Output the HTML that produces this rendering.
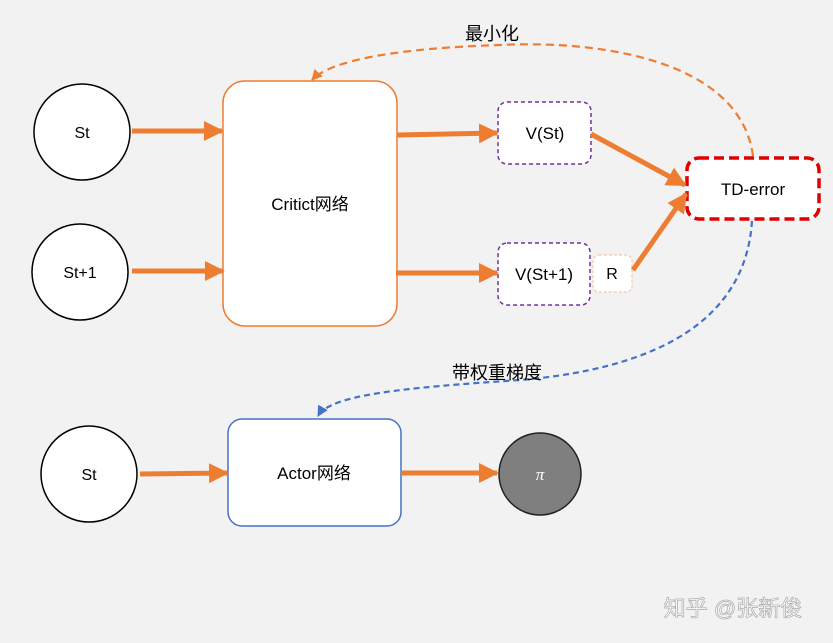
<!DOCTYPE html>
<html><head><meta charset="utf-8"><style>
body{margin:0;background:#f2f2f2;}
svg{display:block}
text{font-family:"Liberation Sans","Noto Sans CJK SC",sans-serif;fill:#000}
</style></head><body>
<svg width="833" height="643" viewBox="0 0 833 643" xmlns="http://www.w3.org/2000/svg">
<defs>
<marker id="ao" viewBox="0 0 10 10" refX="9" refY="5" markerWidth="4" markerHeight="4" orient="auto" markerUnits="strokeWidth"><path d="M0,0 L10,5 L0,10 z" fill="#ed7d31"/></marker>
<marker id="ad" viewBox="0 0 10 10" refX="9" refY="5" markerWidth="5" markerHeight="5" orient="auto" markerUnits="strokeWidth"><path d="M0,0 L10,5 L0,10 z" fill="#ed7d31"/></marker>
<marker id="ab" viewBox="0 0 10 10" refX="9" refY="5" markerWidth="5" markerHeight="5" orient="auto" markerUnits="strokeWidth"><path d="M0,0 L10,5 L0,10 z" fill="#4472c4"/></marker>
</defs>
<rect width="833" height="643" fill="#f2f2f2"/>
<path d="M753,156 C740,60 600,40 500,45 C400,48 330,60 312,80" fill="none" stroke="#ed7d31" stroke-width="2.2" stroke-dasharray="8,5" marker-end="url(#ad)"/>
<text x="492" y="40" font-size="18" text-anchor="middle">最小化</text>
<path d="M752,221 C745,330 640,370 520,380 C400,388 330,395 318,416" fill="none" stroke="#4472c4" stroke-width="2.2" stroke-dasharray="6,4" marker-end="url(#ab)"/>
<text x="497" y="379" font-size="18" text-anchor="middle">带权重梯度</text>
<circle cx="82" cy="132" r="48" fill="#fff" stroke="#000" stroke-width="1.5"/>
<text x="82" y="138" font-size="16" text-anchor="middle">St</text>
<circle cx="80" cy="272" r="48" fill="#fff" stroke="#000" stroke-width="1.5"/>
<text x="80" y="278" font-size="16" text-anchor="middle">St+1</text>
<circle cx="89" cy="474" r="48" fill="#fff" stroke="#000" stroke-width="1.5"/>
<text x="89" y="480" font-size="16" text-anchor="middle">St</text>
<circle cx="540" cy="474" r="41" fill="#7f7f7f" stroke="#222" stroke-width="1.5"/>
<text x="540" y="480" font-size="17" font-style="italic" text-anchor="middle" style="fill:#fff;font-family:'Liberation Serif',serif">π</text>
<rect x="223" y="81" width="174" height="245" rx="22" fill="#fff" stroke="#ed7d31" stroke-width="1.5"/>
<text x="310" y="210" font-size="17" text-anchor="middle">Critict网络</text>
<rect x="228" y="419" width="173" height="107" rx="14" fill="#fff" stroke="#4472c4" stroke-width="1.5"/>
<text x="314" y="479" font-size="17" text-anchor="middle">Actor网络</text>
<rect x="498" y="102" width="93" height="62" rx="9" fill="#fff" stroke="#7030a0" stroke-width="1.5" stroke-dasharray="4,3"/>
<text x="545" y="139" font-size="17" text-anchor="middle">V(St)</text>
<rect x="498" y="243" width="92" height="62" rx="9" fill="#fff" stroke="#7030a0" stroke-width="1.5" stroke-dasharray="4,3"/>
<text x="544" y="280" font-size="17" text-anchor="middle">V(St+1)</text>
<rect x="593" y="255" width="39" height="37" rx="6" fill="#fff" stroke="#f4c7a8" stroke-width="1.2" stroke-dasharray="3,2"/>
<text x="612" y="279" font-size="16" text-anchor="middle">R</text>
<rect x="687" y="158" width="132" height="61" rx="12" fill="#fff" stroke="#e00000" stroke-width="3.5" stroke-dasharray="10,5"/>
<text x="753" y="195" font-size="17" text-anchor="middle">TD-error</text>
<g stroke="#ed7d31" stroke-width="5" fill="none" marker-end="url(#ao)">
<line x1="132" y1="131" x2="222" y2="131"/>
<line x1="132" y1="271" x2="223" y2="271"/>
<line x1="397" y1="135" x2="497" y2="133"/>
<line x1="396" y1="273" x2="497" y2="273"/>
<line x1="591" y1="134" x2="685" y2="185"/>
<line x1="633" y1="270" x2="686" y2="194"/>
<line x1="140" y1="474" x2="227" y2="473"/>
<line x1="401" y1="473" x2="497" y2="473"/>
</g>
<text x="733" y="616" font-size="22" text-anchor="middle" style="fill:#fff;stroke:#aaa;stroke-width:0.7">知乎 @张新俊</text>
</svg>
</body></html>
